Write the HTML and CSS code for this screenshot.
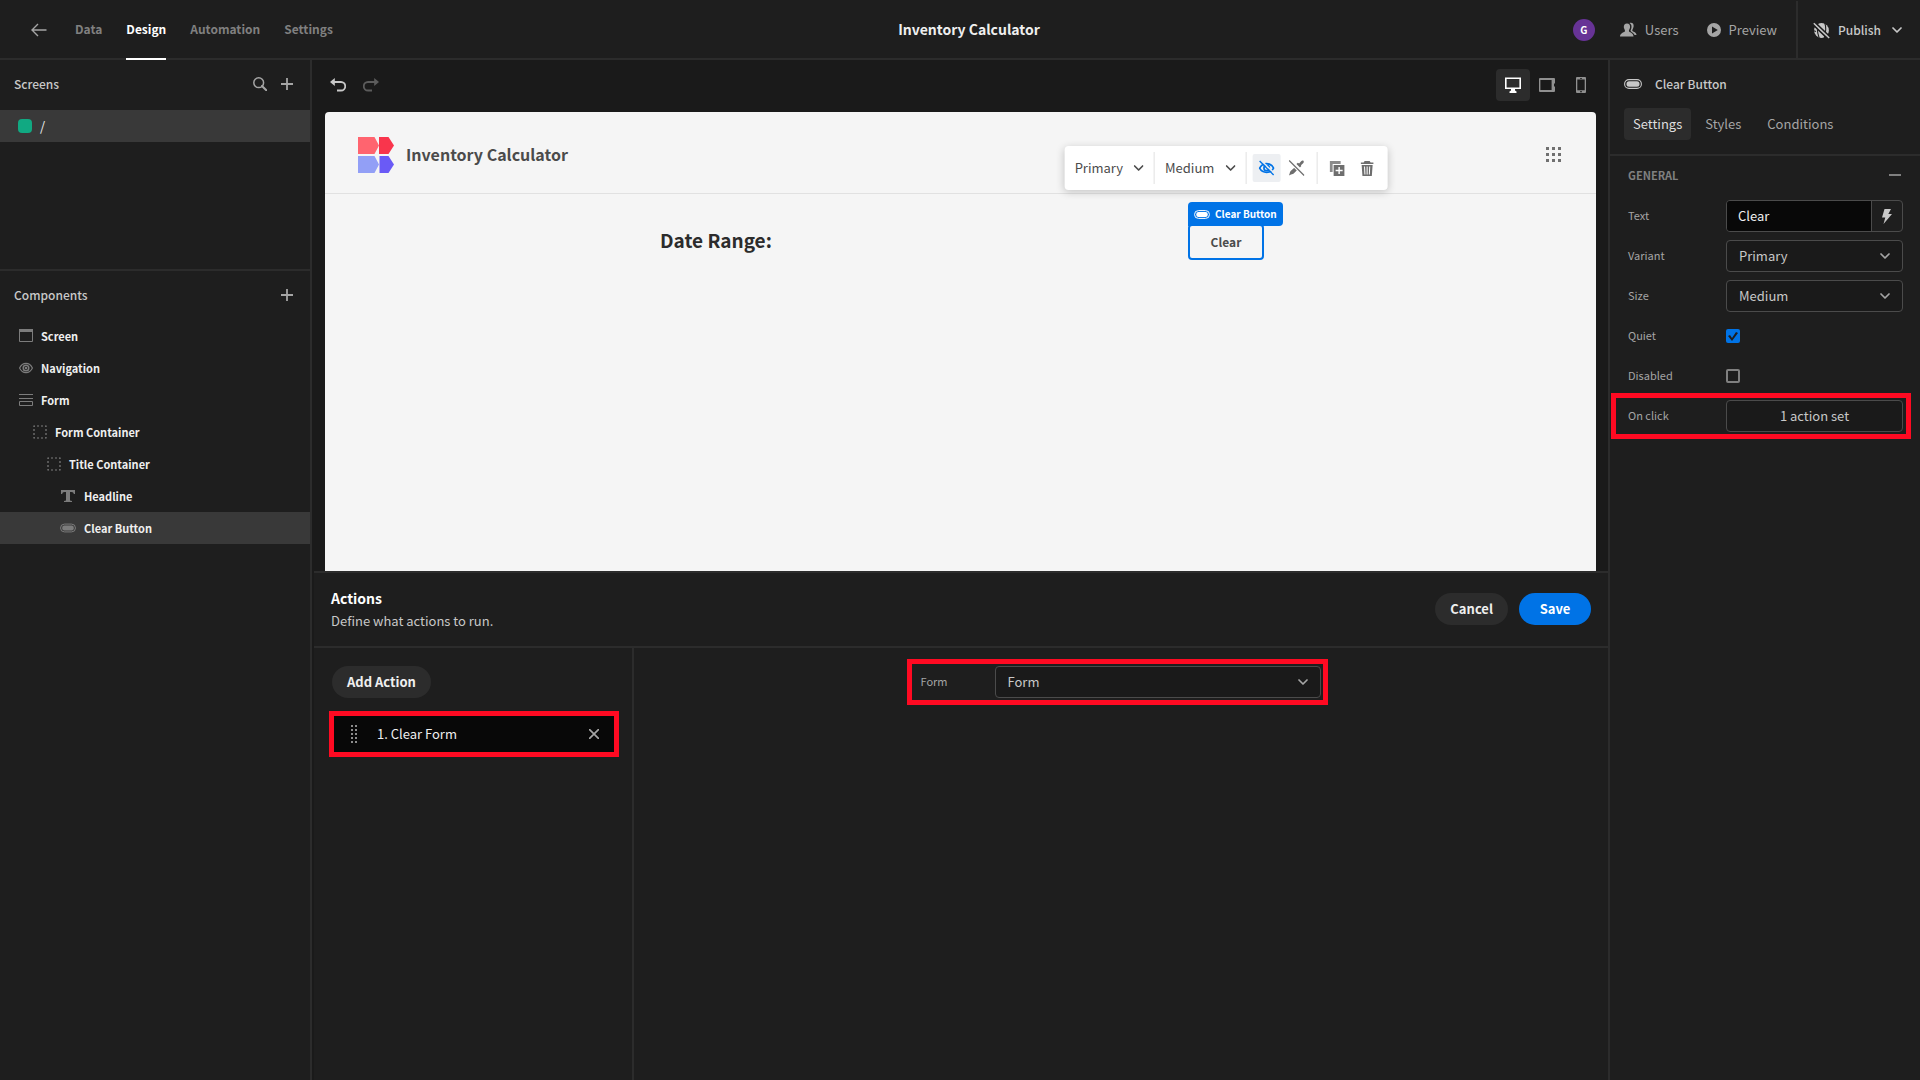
FILE: index.html
```html
<!DOCTYPE html>
<html lang="en">
<head>
<meta charset="utf-8">
<meta name="viewport" content="width=device-width, initial-scale=1">
<title>Inventory Calculator</title>
<link rel="stylesheet" href="styles.css">
</head>
<body>
<svg class="sprite" aria-hidden="true">
  <symbol id="chevron" viewBox="0 0 10 6"><path d="M1 1l4 4 4-4" fill="none" stroke="currentColor" stroke-width="1.7" stroke-linecap="round" stroke-linejoin="round"/></symbol>
  <symbol id="plus" viewBox="0 0 12 12"><path d="M6 0v12M0 6h12" stroke="currentColor" stroke-width="1.8"/></symbol>
  <symbol id="pill" viewBox="0 0 18 10"><rect x=".6" y=".6" width="16.800" height="8.800" rx="4.400" fill="none" stroke="currentColor" stroke-width="1.1"/><rect x="2.500" y="2.200" width="13" height="5.600" rx="2.500" fill="currentColor"/></symbol>
  <symbol id="dashed" viewBox="0 0 14 14"><rect x="1" y="1" width="12" height="12" fill="none" stroke="currentColor" stroke-width="1.2" stroke-dasharray="2 2" stroke-dashoffset="1"/></symbol>
</svg>
<div class="app">
  <header class="topbar">
    <nav class="topbar-nav">
      <a class="back" href="#" aria-label="Back"><svg width="16" height="14" viewBox="0 0 16 14"><path d="M15.500 7H1M7 1L1 7l6 6" fill="none" stroke="currentColor" stroke-width="1.400"/></svg></a>
      <a class="tab" href="#">Data</a>
      <a class="tab is-active" href="#">Design</a>
      <a class="tab" href="#">Automation</a>
      <a class="tab" href="#">Settings</a>
    </nav>
    <h1 class="app-name">Inventory Calculator</h1>
    <div class="topbar-actions">
      <span class="avatar">G</span>
      <button class="link-btn users"><svg width="17" height="16" viewBox="0 0 17 16"><path d="M9.500 1c3-.8 4.500 1 4.100 3.500-.3 2-1.300 3-1.300 4 0 1.200 4.200 1.500 4.200 4.500h-2c-.4-2-4-3-4-4.500 1.400-2.500 1.600-6-1-7.500z" fill="currentColor"/><path d="M7 1.500c2.200 0 3.300 1.500 3.100 3.800-.1 1.600-1.200 2.500-1.200 3.700 0 1.500 4.600 1.600 4.600 5.500H0C0 10.600 5 10.500 5 9c0-1.200-1-2.100-1.200-3.700C3.700 3 4.800 1.500 7 1.500z" fill="currentColor"/></svg>Users</button>
      <button class="link-btn"><svg width="14" height="14" viewBox="0 0 14 14"><path fill-rule="evenodd" d="M7 0a7 7 0 110 14A7 7 0 017 0zM5 3.500v7L10.800 7z" fill="currentColor"/></svg>Preview</button>
      <button class="link-btn publish"><svg width="17" height="17" viewBox="0 0 17 17"><circle cx="8.500" cy="8.500" r="7.400" fill="currentColor"/><path d="M5.200 0C3.500 5 4 10 6.400 17M11.500 0c1.800 5 1.500 11-.5 17M0 8.500l3 1" fill="none" stroke="#1e1e1e" stroke-width="1.100"/><path d="M0 2.500L15 17M2 .5L17 15" stroke="#1e1e1e" stroke-width="1.800"/><path d="M.8 1.200L16.200 16" stroke="currentColor" stroke-width="1.500"/></svg>Publish<svg class="chev" width="10" height="6"><use href="#chevron"/></svg></button>
    </div>
  </header>

  <main class="workspace">
    <aside class="left-panel">
      <section class="screens">
        <div class="panel-head"><h2>Screens</h2>
          <button class="icon-btn" aria-label="Search screens"><svg width="14" height="14" viewBox="0 0 14 14"><circle cx="5.700" cy="5.700" r="4.900" fill="none" stroke="currentColor" stroke-width="1.500"/><path d="M9 9l4.300 4.300" stroke="currentColor" stroke-width="2" stroke-linecap="round"/></svg></button>
          <button class="icon-btn" aria-label="Add screen"><svg width="12" height="12"><use href="#plus"/></svg></button>
        </div>
        <a class="screen-row" href="#"><span class="swatch"></span>/</a>
      </section>
      <section class="components">
        <div class="panel-head"><h2>Components</h2>
          <button class="icon-btn" aria-label="Add component"><svg width="12" height="12"><use href="#plus"/></svg></button>
        </div>
        <ul class="tree">
          <li class="node"><svg width="14" height="14" viewBox="0 0 14 14"><path d="M.5 1.500v11h13v-11" fill="none" stroke="currentColor"/><path d="M0 0h14v3H0z" fill="currentColor"/></svg>Screen</li>
          <li class="node"><svg width="14" height="14" viewBox="0 0 14 14"><path d="M.6 7C3.500.8 10.500.8 13.400 7c-2.900 6.200-9.900 6.200-12.800 0z" fill="none" stroke="currentColor" stroke-width="1.200"/><circle cx="7" cy="7" r="2.800" fill="none" stroke="currentColor" stroke-width="1.500"/><circle cx="7" cy="7" r="1.300" fill="currentColor"/></svg>Navigation</li>
          <li class="node"><svg width="14" height="14" viewBox="0 0 14 14"><path d="M0 1.500h14M0 5.500h14M.5 8.500h13v4H.5z" fill="none" stroke="currentColor"/></svg>Form</li>
          <li class="node depth-1"><svg width="14" height="14"><use href="#dashed"/></svg>Form Container</li>
          <li class="node depth-2"><svg width="14" height="14"><use href="#dashed"/></svg>Title Container</li>
          <li class="node depth-3"><svg width="14" height="14" viewBox="0 0 14 14"><path d="M0 1h14v4h-1.200c-.2-1.300-.8-2-2.300-2H9v8.500l2 .6v.9H3v-.9l2-.6V3H3.500C2 3 1.400 3.700 1.200 5H0z" fill="currentColor"/></svg>Headline</li>
          <li class="node depth-3 is-selected"><svg width="16" height="10"><use href="#pill"/></svg>Clear Button</li>
        </ul>
      </section>
    </aside>

    <section class="center">
      <div class="stage">
        <div class="stage-bar">
          <button class="icon-btn undo" aria-label="Undo"><svg width="16" height="14" viewBox="0 0 16 14"><path d="M3 4h8a4.200 4.200 0 010 8.500H7" fill="none" stroke="currentColor" stroke-width="1.800"/><path d="M4.800 0v8L0 4z" fill="currentColor"/></svg></button>
          <button class="icon-btn redo" aria-label="Redo"><svg width="16" height="14" viewBox="0 0 16 14"><path d="M13 4H5a4.200 4.200 0 000 8.500h4" fill="none" stroke="currentColor" stroke-width="1.800"/><path d="M11.200 0v8L16 4z" fill="currentColor"/></svg></button>
          <div class="devices">
            <button class="device is-active" aria-label="Desktop"><svg width="16" height="16" viewBox="0 0 16 16"><path d="M.8 1.300h14.400v10H.8z" fill="none" stroke="currentColor" stroke-width="1.600"/><path d="M6 12h4v1.500l1.500 1V16h-7v-1.500l1.500-1z" fill="currentColor"/></svg></button>
            <button class="device" aria-label="Tablet"><svg width="16" height="14" viewBox="0 0 16 14"><path fill-rule="evenodd" d="M1 0h14a1 1 0 011 1v4.500h-1v3h1V13a1 1 0 01-1 1H1a1 1 0 01-1-1V1a1 1 0 011-1zm.4 2v10h11.200V2z" fill="currentColor"/></svg></button>
            <button class="device" aria-label="Mobile"><svg width="10" height="16" viewBox="0 0 10 16"><path fill-rule="evenodd" d="M1 0h8a1 1 0 011 1v14a1 1 0 01-1 1H1a1 1 0 01-1-1V1a1 1 0 011-1zm.3 2.500v10.800h7.400V2.500zM4 1v.8h2V1zm0 13.300v.9h2v-.9z" fill="currentColor"/></svg></button>
          </div>
        </div>
        <div class="canvas">
          <div class="canvas-nav">
            <svg width="36" height="36" viewBox="0 0 36 36"><path d="M0 0h16.500L21 8.500 16.500 17H0z" fill="#ff646f"/><path d="M21 0h9.500L36 8.500 30.500 17H21z" fill="#f9354c"/><path d="M0 19h16.500l4.500 8.500-4.500 8.500H0z" fill="#929ff6"/><path d="M21.500 19h9l5.500 8.500-5.500 8.500h-9z" fill="#6a5af6"/></svg>
            <span class="canvas-title">Inventory Calculator</span>
            <svg class="grid-icon" width="15" height="15" viewBox="0 0 15 15"><path d="M0 0h3v3H0zM6 0h3v3H6zM12 0h3v3h-3zM0 6h3v3H0zM6 6h3v3H6zM12 6h3v3h-3zM0 12h3v3H0zM6 12h3v3H6zM12 12h3v3h-3z" fill="#707070"/></svg>
          </div>
          <div class="canvas-body">
            <div class="title-row">
              <h2>Date Range:</h2>
              <div class="selection">
                <button class="clear-btn">Clear</button>
                <span class="selection-tag"><svg width="16" height="9"><use href="#pill"/></svg>Clear Button</span>
                <div class="quickbar">
                  <button class="pick">Primary<svg width="10" height="6"><use href="#chevron"/></svg></button>
                  <button class="pick">Medium<svg width="10" height="6"><use href="#chevron"/></svg></button>
                  <div class="tools">
                    <button class="tool is-on" aria-label="Quiet"><svg width="16" height="16" viewBox="0 0 16 16"><path d="M1 8.200C4 2 12 2 15 8.200 12 13.800 4 13.800 1 8.200z" fill="none" stroke="currentColor" stroke-width="1.700"/><circle cx="8" cy="8" r="2.700" fill="none" stroke="currentColor" stroke-width="1.700"/><path d="M2.500.5l14 13.500" stroke="#edeff2" stroke-width="1.500"/><path d="M1 1l14 14" stroke="currentColor" stroke-width="1.400"/></svg></button>
                    <button class="tool" aria-label="Disable"><svg width="16" height="16" viewBox="0 0 16 16"><path d="M10.500 3.500l2-2.300c1.800-1.700 3.700.2 2 2l-2.200 2 .4.900-1.400 1.400-3.500-3.400 1.400-1.400zM6.500 7l2.600 2.600-4 4c-1 .8-2.500.7-4.800 1.900 1-2.500.9-3.700 2-4.800z" fill="currentColor"/><path d="M0 1l15 15" stroke="#fff" stroke-width="2"/><path d="M.5.5l15 15" stroke="currentColor" stroke-width="1.300"/></svg></button>
                  </div>
                  <div class="tools">
                    <button class="tool" aria-label="Duplicate"><svg width="15" height="15" viewBox="0 0 15 15"><path d="M0 0h11v3H3v8H0z" fill="currentColor" opacity=".8"/><path fill-rule="evenodd" d="M4 4h11v11H4zm4.800 2v2.800H6v1.400h2.800V13h1.400v-2.800H13V8.800h-2.800V6z" fill="currentColor"/></svg></button>
                    <button class="tool" aria-label="Delete"><svg width="13" height="15" viewBox="0 0 13 15"><path fill-rule="evenodd" d="M4 0h5l1 1.500h3V3H0V1.500h3zM1 4h11l-.8 11H1.800zm2.400 1.500l.4 8h1l-.4-8zm2.600 0v8h1v-8zm2.600 0l-.4 8h1l.4-8z" fill="currentColor"/></svg></button>
                  </div>
                </div>
              </div>
            </div>
          </div>
        </div>
      </div>

      <section class="drawer">
        <div class="drawer-head">
          <div><h2>Actions</h2><p>Define what actions to run.</p></div>
          <div class="drawer-buttons"><button class="btn">Cancel</button><button class="btn is-cta">Save</button></div>
        </div>
        <div class="drawer-body">
          <div class="action-list">
            <button class="btn">Add Action</button>
            <div class="action-item marked">
              <svg class="grip" width="6" height="18" viewBox="0 0 6 18"><path d="M1 0v18M5 0v18" stroke="currentColor" stroke-width="2" stroke-dasharray="2 2"/></svg>
              <span>1. Clear Form</span>
              <button class="icon-btn" aria-label="Remove action"><svg width="10" height="10" viewBox="0 0 10 10"><path d="M0 0l10 10M10 0L0 10" stroke="currentColor" stroke-width="1.700"/></svg></button>
            </div>
          </div>
          <div class="action-config">
            <div class="config-row marked">
              <label for="form-target">Form</label>
              <div class="select"><select id="form-target"><option>Form</option></select><svg width="10" height="6"><use href="#chevron"/></svg></div>
            </div>
          </div>
        </div>
      </section>
    </section>

    <aside class="right-panel">
      <div class="inspector-head">
        <div class="inspector-title"><svg width="18" height="10"><use href="#pill"/></svg><h2>Clear Button</h2></div>
        <div class="pills"><button class="pill is-active">Settings</button><button class="pill">Styles</button><button class="pill">Conditions</button></div>
      </div>
      <div class="group-head"><h3>GENERAL</h3><button class="icon-btn" aria-label="Collapse"><svg width="12" height="2"><path d="M0 1h12" stroke="currentColor" stroke-width="2"/></svg></button></div>
      <div class="fields">
        <div class="field"><label for="f-text">Text</label>
          <div class="text-combo"><input id="f-text" type="text" value="Clear"><button aria-label="Bind value"><svg width="10" height="15" viewBox="0 0 10 15"><path d="M2.500 0H9L6.300 5H10L1.500 15l1.800-6.500H0z" fill="currentColor"/></svg></button></div></div>
        <div class="field"><label for="f-variant">Variant</label>
          <div class="select"><select id="f-variant"><option>Primary</option></select><svg width="10" height="6"><use href="#chevron"/></svg></div></div>
        <div class="field"><label for="f-size">Size</label>
          <div class="select"><select id="f-size"><option>Medium</option></select><svg width="10" height="6"><use href="#chevron"/></svg></div></div>
        <div class="field"><label for="f-quiet">Quiet</label><input id="f-quiet" type="checkbox" checked></div>
        <div class="field"><label for="f-disabled">Disabled</label><input id="f-disabled" type="checkbox"></div>
        <div class="field marked"><label for="f-click">On click</label><button class="action-btn" id="f-click">1 action set</button></div>
      </div>
    </aside>
  </main>
</div>
</body>
</html>
```
FILE: styles.css
```css
:root {
  --bg: #1e1e1e;
  --bg-deep: #1a1a1a;
  --line: #2c2c2c;
  --row: #393939;
  --field-line: #4b4b4b;
  --text: #c8c8c8;
  --muted: #a5a5a5;
  --bright: #efefef;
  --blue: #0073e6;
  --mark: #ff0a22;
}

* { box-sizing: border-box; }

body {
  margin: 0;
  background: var(--bg);
  color: var(--text);
  font: 400 13px/20px "Noto Sans CJK SC", "Noto Sans", sans-serif;
}

h1, h2, h3, p, ul { margin: 0; padding: 0; font-size: 12px; font-weight: 500; }
ul { list-style: none; }
a { color: inherit; text-decoration: none; }
svg { display: block; flex: none; }
.sprite { position: absolute; width: 0; height: 0; }

button, input, select {
  margin: 0;
  padding: 0;
  border: 0;
  background: none;
  color: inherit;
  font: inherit;
}

.app { display: flex; flex-direction: column; min-height: 100vh; }

/* Top bar */
.topbar {
  display: grid;
  grid-template-columns: 1fr auto 1fr;
  height: 60px;
  border-bottom: 2px solid var(--line);
}
.topbar-nav { display: flex; gap: 24px; padding-left: 31px; color: #808080; font-size: 12px; font-weight: 700; }
.back { display: flex; align-items: center; margin-right: 4px; color: var(--muted); }
.tab { height: 60px; line-height: 58px; }
.tab.is-active { color: #fff; border-bottom: 2px solid #fff; }
.app-name { padding-left: 18px; color: var(--bright); font-size: 14px; font-weight: 700; line-height: 58px; }
.topbar-actions { display: flex; align-items: center; justify-content: flex-end; }
.avatar {
  width: 22px;
  margin-right: 25px;
  border-radius: 50%;
  background: #673396;
  color: #fff;
  font-size: 10px;
  font-weight: 700;
  line-height: 22px;
  text-align: center;
}
.link-btn { display: flex; align-items: center; gap: 8px; height: 58px; color: var(--muted); }
.users { margin-right: 28px; }
.publish { margin-left: 19px; padding: 0 18px 0 15px; border-left: 2px solid var(--line); color: var(--text); font-size: 12px; font-weight: 500; }
.publish .chev { margin-left: 3px; }

/* Columns */
.workspace { display: grid; grid-template-columns: 312px minmax(0, 1fr) 312px; flex: 1; }
.left-panel { border-right: 2px solid var(--line); }
.right-panel { border-left: 2px solid var(--line); }
.center { display: grid; grid-template-rows: minmax(0, 1fr) 509px; background: var(--bg-deep); }
.icon-btn { display: flex; align-items: center; color: var(--muted); }

/* Left panel */
.panel-head { display: flex; align-items: center; gap: 14px; height: 50px; padding: 0 17px 2px 14px; }
.panel-head h2 { flex: 1; }
.screens { height: 211px; border-bottom: 2px solid var(--line); }
.components .panel-head { height: 49px; }
.screen-row { display: flex; align-items: center; gap: 8px; height: 32px; padding-left: 18px; background: var(--row); color: var(--bright); }
.swatch { width: 14px; height: 14px; border-radius: 4px; background: #11a982; }
.node { display: flex; align-items: center; gap: 8px; height: 32px; padding-left: 19px; color: var(--bright); font-size: 11px; font-weight: 700; }
.node svg { color: #7c7c7c; }
.depth-1 { padding-left: 33px; }
.depth-2 { padding-left: 47px; }
.depth-3 { padding-left: 60px; }
.depth-3 svg { width: 16px; }
.is-selected { background: var(--row); }

/* Stage */
.stage { display: flex; flex-direction: column; }
.stage-bar { display: flex; align-items: center; gap: 17px; height: 52px; padding: 0 10px 2px 18px; }
.undo { color: var(--text); }
.redo { color: #5c5c5c; }
.devices { display: flex; margin-left: auto; }
.device { display: grid; place-items: center; width: 34px; height: 32px; border-radius: 4px; color: #909090; }
.device.is-active { background: var(--line); color: #fff; }
.canvas { flex: 1; margin: 0 12px 0 13px; border-radius: 4px 4px 0 0; background: #f5f5f5; color: #4b4b4b; }
.canvas-nav { display: flex; align-items: center; height: 82px; padding: 4px 35px 0 33px; border-bottom: 1px solid #e1e1e1; }
.canvas-title { margin-left: 12px; padding-bottom: 2px; font-size: 16px; font-weight: 700; }
.grid-icon { margin-left: auto; }
.canvas-body { padding: 30px 0 0 3px; }
.title-row { display: flex; align-items: center; justify-content: space-between; max-width: 604px; margin: 0 auto; }
.title-row h2 { padding-bottom: 4px; color: #2c2c2c; font-size: 19px; font-weight: 700; line-height: 30px; }
.selection { position: relative; }
.clear-btn { width: 76px; height: 36px; border: 2px solid var(--blue); border-radius: 4px; font-size: 12px; font-weight: 700; }
.selection-tag {
  position: absolute;
  bottom: calc(100% - 2px);
  left: 0;
  display: flex;
  align-items: center;
  gap: 5px;
  height: 24px;
  padding: 0 6px;
  border-radius: 4px 4px 4px 0;
  background: var(--blue);
  color: #fff;
  font-size: 10px;
  font-weight: 700;
  white-space: nowrap;
}
.quickbar {
  position: absolute;
  bottom: calc(100% + 34px);
  left: 50%;
  display: flex;
  align-items: center;
  height: 44px;
  border-radius: 4px;
  background: #fff;
  box-shadow: 0 2px 8px rgba(0, 0, 0, .2);
  transform: translateX(-50%);
}
.pick { display: flex; align-items: center; gap: 11px; height: 32px; padding: 0 10px; border-right: 1px solid #e1e1e1; }
.tools { display: flex; align-items: center; gap: 2px; height: 32px; padding: 0 6px; }
.tools + .tools { border-left: 1px solid #e1e1e1; }
.tool { display: grid; place-items: center; width: 28px; height: 28px; border-radius: 2px; color: #6e6e6e; }
.tool.is-on { background: #edeff2; color: var(--blue); }

/* Actions drawer */
.drawer { display: flex; flex-direction: column; margin-left: 2px; border-top: 2px solid var(--line); background: var(--bg); }
.drawer-head { display: flex; align-items: center; justify-content: space-between; height: 75px; padding: 0 17px 2px; border-bottom: 2px solid var(--line); }
.drawer-head h2 { color: #fff; font-size: 14px; font-weight: 700; line-height: 24px; }
.drawer-head p { font-size: 13px; font-weight: 400; line-height: 22px; }
.drawer-buttons { display: flex; gap: 11px; }
.btn { min-width: 72px; height: 32px; padding: 0 15px; border-radius: 16px; background: var(--line); color: var(--bright); font-weight: 700; }
.btn.is-cta { background: var(--blue); color: #fff; }
.drawer-body { display: grid; grid-template-columns: 320px minmax(0, 1fr); flex: 1; }
.action-list { padding: 18px; border-right: 2px solid var(--line); }
.marked { outline: 5px solid var(--mark); }
.action-item { display: flex; align-items: center; height: 36px; margin: 18px 0 0 2px; padding: 0 15px 0 17px; background: #080808; color: var(--bright); }
.action-item span { flex: 1; margin-left: 20px; }
.grip { color: #8c8c8c; }
.action-config { padding-right: 8px; }
.config-row { display: grid; grid-template-columns: 74px 1fr; align-items: center; width: 411px; height: 36px; margin: 16px auto 0; padding: 0 2px 0 9px; }
label { padding-bottom: 2px; color: var(--muted); font-size: 11px; }

/* Form controls */
.select { display: grid; align-items: center; }
.select > * { grid-area: 1 / 1; }
.select select { width: 100%; height: 32px; padding: 0 12px; border: 1px solid var(--field-line); border-radius: 4px; background: var(--bg-deep); appearance: none; }
.select svg { justify-self: end; margin-right: 13px; color: var(--muted); pointer-events: none; }
.text-combo { display: grid; grid-template-columns: minmax(0, 1fr) 31px; height: 32px; border: 1px solid var(--field-line); border-radius: 4px; overflow: hidden; }
.text-combo input { padding: 0 11px; background: #080808; color: var(--bright); }
.text-combo button { display: grid; place-items: center; border-left: 1px solid var(--field-line); }
input[type="checkbox"] { width: 14px; height: 14px; border: 2px solid #808080; border-radius: 2px; appearance: none; }
input[type="checkbox"]:checked { border: 0; background: var(--blue); }
input[type="checkbox"]:checked::before {
  content: "";
  display: block;
  height: 14px;
  background: var(--bg);
  clip-path: polygon(2px 7px, 4px 6px, 6px 9px, 10px 3px, 12px 4px, 6px 12px);
}
.action-btn { height: 32px; border: 1px solid var(--field-line); border-radius: 4px; background: var(--bg-deep); }

/* Right panel */
.inspector-head { height: 96px; padding: 14px; border-bottom: 2px solid var(--line); }
.inspector-title { display: flex; align-items: center; gap: 13px; height: 20px; }
.pills { display: flex; gap: 2px; margin-top: 14px; }
.pill { height: 32px; padding: 0 12px; border-radius: 4px; color: var(--muted); }
.pill.is-active { padding: 0 9px; background: var(--line); color: #dedede; }
.group-head { display: flex; align-items: center; justify-content: space-between; height: 38px; padding: 0 19px 0 18px; }
.group-head h3, .group-head .icon-btn { color: #808080; font-size: 11px; font-weight: 700; }
.fields { display: grid; gap: 4px; padding: 4px 14px 4px 6px; }
.field { display: grid; grid-template-columns: 98px minmax(0, 1fr); align-items: center; height: 36px; padding: 0 3px 0 12px; }
```
